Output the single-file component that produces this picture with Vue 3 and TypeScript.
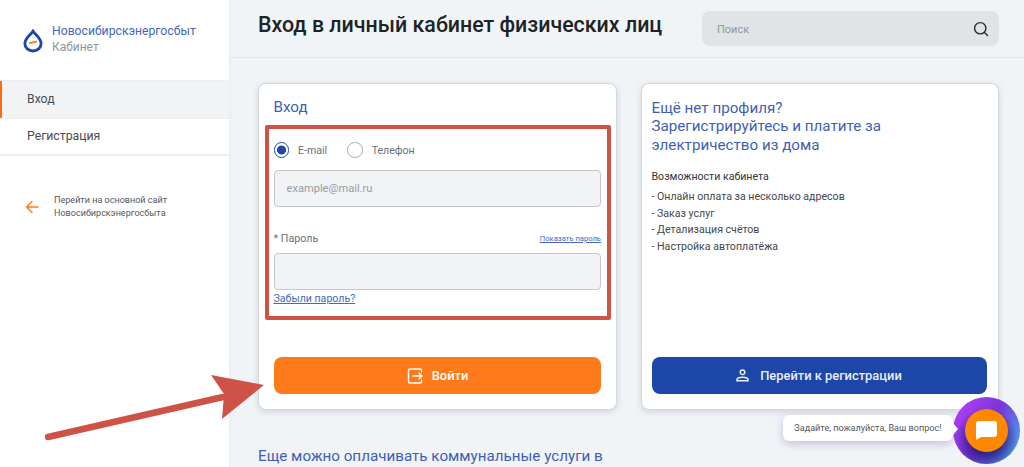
<script setup lang="ts">
const features: string[] = [
  '- Онлайн оплата за несколько адресов',
  '- Заказ услуг',
  '- Детализация счётов',
  '- Настройка автоплатёжа',
]
</script>

<template>
  <div class="page">
    <aside class="side">
      <div class="brand">
        <svg class="logo" width="20" height="24" viewBox="0 0 21 25">
          <path d="M10.5 2.200C8.500 5.600 2 9.500 2 15.200C2 19.800 5.800 23 10.500 23C15.200 23 19 19.800 19 15.200C19 9.500 12.500 5.600 10.500 2.200Z" fill="none" stroke="#1c47a8" stroke-width="3"/>
          <path d="M7 14.800L14 13.200" stroke="#ff7a1a" stroke-width="1.800" stroke-linecap="round"/>
        </svg>
        <div class="brand-text">
          <div class="brand-name">Новосибирскэнергосбыт</div>
          <div class="brand-sub">Кабинет</div>
        </div>
      </div>
      <nav class="nav">
        <div class="nav-item active">Вход</div>
        <div class="nav-item">Регистрация</div>
      </nav>
      <div class="back">
        <svg width="14" height="14" viewBox="0 0 14 14" fill="none" stroke="#ff7a1a" stroke-width="1.400" stroke-linecap="round" stroke-linejoin="round">
          <path d="M13 7H1.500M7 1.500L1.500 7L7 12.500"/>
        </svg>
        <div class="back-text">Перейти на основной сайт<br>Новосибирскэнергосбыта</div>
      </div>
    </aside>

    <main class="main">
      <header class="top">
        <h1 class="title">Вход в личный кабинет физических лиц</h1>
        <div class="search">
          <span>Поиск</span>
          <svg width="16" height="16" viewBox="0 0 17 17" fill="none" stroke="#2a2d30" stroke-width="1.500" stroke-linecap="round">
            <circle cx="7.700" cy="7.700" r="6"/>
            <path d="M12.200 12.200L15.500 15.500"/>
          </svg>
        </div>
      </header>

      <div class="content">
        <div class="cards">
          <section class="card">
            <h2 class="card-title login-title">Вход</h2>
            <div class="radios">
              <label class="radio"><span class="dot on"></span>E-mail</label>
              <label class="radio"><span class="dot"></span>Телефон</label>
            </div>
            <div class="input">example@mail.ru</div>
            <div class="pass-row">
              <span class="pass-label">* Пароль</span>
              <a class="show-pass">Показать пароль</a>
            </div>
            <div class="input"></div>
            <a class="forgot">Забыли пароль?</a>
            <button class="btn orange">
              <svg width="16" height="16" viewBox="0 0 16 16" fill="none" stroke="#fff" stroke-width="1.400" stroke-linecap="round" stroke-linejoin="round">
                <path d="M14.500 4V2.500A1.500 1.500 0 0 0 13 1H3A1.500 1.500 0 0 0 1.500 2.500V13.500A1.500 1.500 0 0 0 3 15H13A1.500 1.500 0 0 0 14.500 13.500V12"/>
                <path d="M6 8H15M12 5L15 8L12 11"/>
              </svg>
              Войти
            </button>
          </section>

          <section class="card">
            <h2 class="card-title promo-title">Ещё нет профиля?<br>Зарегистрируйтесь и платите за<br>электричество из дома</h2>
            <div class="caps">Возможности кабинета</div>
            <div class="feature" v-for="f in features" :key="f">{{ f }}</div>
            <button class="btn blue">
              <svg width="13" height="13" viewBox="0 0 13 13" fill="none" stroke="#e8edf8" stroke-width="1.500">
                <circle cx="6.500" cy="3.200" r="2.300"/>
                <path d="M1 11.800V10.800C1 9.200 3 8.300 6.500 8.300C10 8.300 12 9.200 12 10.800V11.800Z"/>
              </svg>
              Перейти к регистрации
            </button>
          </section>
        </div>
        <h3 class="more">Еще можно оплачивать коммунальные услуги в</h3>
      </div>
    </main>

    <div class="red-box"></div>
    <svg class="arrow" width="240" height="80" viewBox="0 0 240 80">
      <path d="M3 65L178 25" stroke="#cf5246" stroke-width="6.500" stroke-linecap="round"/>
      <path d="M166 3L219 13L177 47L179 22Z" fill="#cf5246"/>
    </svg>

    <div class="chat">
      <div class="bubble">Задайте, пожалуйста, Ваш вопрос!</div>
      <div class="ring">
        <div class="core">
          <svg width="21" height="19" viewBox="0 0 21 19">
            <path d="M3 0H18A3 3 0 0 1 21 3V13A3 3 0 0 1 18 16H5L0 19V3A3 3 0 0 1 3 0Z" fill="#fff"/>
          </svg>
        </div>
      </div>
    </div>
  </div>
</template>

<style>
html, body { margin: 0; overflow: hidden; }
</style>

<style scoped>
* { box-sizing: border-box; }
.page {
  position: relative;
  display: flex;
  width: 1024px;
  height: 467px;
  overflow: hidden;
  font-family: Roboto, "Liberation Sans", sans-serif;
  background: #f1f4f6;
}
.side {
  width: 229px;
  flex: none;
  background: #fff;
  box-shadow: 0 0 6px rgba(0, 0, 0, .05);
}
.brand {
  display: flex;
  align-items: center;
  gap: 9px;
  height: 80px;
  padding: 0 0 3px 23px;
}
.logo { margin-top: 4px; }
.brand-name { font-size: 12.200px; line-height: 16px; color: #4468c0; }
.brand-sub { font-size: 12px; line-height: 16px; color: #8f96a3; }
.nav { border-top: 1px solid #eceef0; }
.nav-item {
  height: 37.500px;
  padding: 0 0 0 27px;
  display: flex;
  align-items: center;
  font-size: 12.250px;
  color: #4a4d52;
  border-bottom: 1px solid #eceef0;
}
.nav-item + .nav-item { border-bottom-width: 2px; }
.nav-item.active {
  padding-bottom: 1px;
  background: #f2f3f5;
  box-shadow: inset 2px 0 0 #ff6a13;
}
.back {
  display: flex;
  align-items: center;
  gap: 15px;
  margin: 38px 0 0 25px;
}
.back-text { font-size: 9.050px; line-height: 12.500px; color: #55585e; }
.main { flex: 1; min-width: 0; }
.top {
  height: 58px;
  display: flex;
  align-items: center;
  padding: 0 25px 0 29px;
  justify-content: space-between;
  border-bottom: 1px solid #e4e7ea;
}
.title {
  margin: 0 0 8px;
  font-size: 21.400px;
  font-weight: 500;
  color: #202326;
  white-space: nowrap;
}
.search {
  width: 297px;
  height: 35px;
  border-radius: 8px;
  background: #e1e4e7;
  display: flex;
  align-items: center;
  justify-content: space-between;
  padding: 1px 10px 0 15px;
  font-size: 11px;
  color: #8e949c;
}
.content { padding: 25px 25px 0 29px; }
.cards { display: flex; gap: 23.500px; }
.card {
  position: relative;
  width: 359px;
  height: 327px;
  background: #fff;
  border: 1px solid #d5d8dc;
  border-radius: 8px;
  box-shadow: 0 2px 6px rgba(60, 70, 90, .18);
  padding: 0 15px 0 14.500px;
}
.card + .card { width: 358px; padding: 0 10px; }
.card-title { margin: 0; font-weight: 400; color: #3f5fb5; font-size: 15.200px; }
.login-title { padding-top: 13px; line-height: 20px; }
.promo-title { padding-top: 14.500px; line-height: 18.500px; }
.radios { display: flex; gap: 20px; margin-top: 25px; height: 16px; align-items: center; }
.radio { display: flex; align-items: center; gap: 9px; font-size: 10.600px; color: #6b6f76; }
.dot {
  display: block;
  width: 15.500px;
  height: 15.500px;
  border: 1.500px solid #aaadb8;
  border-radius: 50%;
}
.dot.on { border-color: #1d47a9; background: radial-gradient(circle, #1d47a9 0 4.200px, #fff 4.800px); }
.input {
  height: 37px;
  margin-top: 12px;
  border: 1px solid #c4c7cc;
  border-radius: 4px;
  background: #f2f3f5;
  padding: 0 12px;
  display: flex;
  align-items: center;
  font-size: 11.100px;
  color: #989da4;
}
.pass-row {
  display: flex;
  justify-content: space-between;
  align-items: center;
  margin-top: 21px;
  height: 20px;
}
.pass-row + .input { margin-top: 5px; }
.pass-label { font-size: 10.700px; color: #6b6f76; }
.show-pass { font-size: 7.600px; color: #4468c0; text-decoration: underline; }
.forgot { display: block; margin-top: 2px; font-size: 10.600px; line-height: 14px; color: #4468c0; text-decoration: underline; }
.btn {
  position: absolute;
  left: 15px;
  right: 15px;
  bottom: 15px;
  height: 37px;
  border: 0;
  border-radius: 8px;
  display: flex;
  align-items: center;
  justify-content: center;
  gap: 9px;
  font-family: inherit;
  font-size: 12.900px;
  font-weight: 500;
}
.orange { background: #ff7a1a; color: #fff; }
.blue { left: 10px; right: 11px; background: #1c47a8; color: #e8edf8; gap: 11px; }
.caps { margin-top: 16px; font-size: 10.600px; line-height: 14px; color: #33363b; }
.feature { font-size: 10.600px; line-height: 16.700px; color: #44474d; }
.caps + .feature { margin-top: 5px; }
.more {
  margin: 36px 0 0;
  font-size: 15.200px;
  font-weight: 400;
  line-height: 20px;
  color: #3f5fb5;
  white-space: nowrap;
}
.red-box {
  position: absolute;
  left: 265px;
  top: 125px;
  width: 346px;
  height: 195px;
  border: 4px solid #cf5246;
  border-radius: 2px;
}
.arrow { position: absolute; left: 45px; top: 372px; }
.chat {
  position: absolute;
  left: 783px;
  top: 397px;
  display: flex;
  align-items: center;
}
.bubble {
  position: relative;
  z-index: 1;
  width: 170px;
  height: 26px;
  margin-top: -6px;
  background: #fff;
  border-radius: 6px;
  display: flex;
  align-items: center;
  justify-content: center;
  font-size: 9.100px;
  color: #55585e;
  box-shadow: 0 3px 8px rgba(110, 60, 160, .3);
}
.bubble::after {
  content: "";
  position: absolute;
  right: -5px;
  top: 8px;
  border-left: 5px solid #fff;
  border-top: 6px solid transparent;
  border-bottom: 6px solid transparent;
}
.ring {
  position: relative;
  width: 67px;
  height: 67px;
  border-radius: 50%;
  background:
    radial-gradient(circle at 50% 62%, rgba(30, 20, 110, .7) 30%, rgba(30, 20, 110, 0) 58%),
    linear-gradient(120deg, #a83cf5 15%, #7a35d8 50%, #4aa2e8 90%);
  display: flex;
  align-items: center;
  justify-content: center;
}
.core {
  width: 43px;
  height: 43px;
  border-radius: 50%;
  background: #ff8800;
  display: flex;
  align-items: center;
  justify-content: center;
}
</style>
